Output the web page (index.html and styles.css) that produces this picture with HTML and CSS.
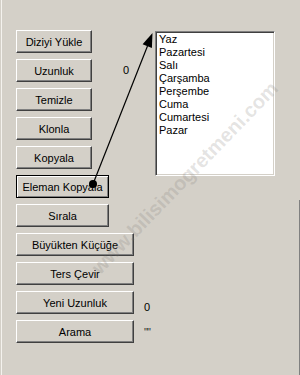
FILE: index.html
```html
<!DOCTYPE html>
<html>
<head>
<meta charset="utf-8">
<link rel="stylesheet" href="styles.css">
</head>
<body>
<div class="window">
  <div class="form">
    <div class="row"><button class="btn w75">Diziyi Yükle</button></div>
    <div class="listbox">
      <div>Yaz</div>
      <div>Pazartesi</div>
      <div>Salı</div>
      <div>Çarşamba</div>
      <div>Perşembe</div>
      <div>Cuma</div>
      <div>Cumartesi</div>
      <div>Pazar</div>
    </div>
    <div class="row"><button class="btn w75">Uzunluk</button><span class="lbl lbl-far">0</span></div>
    <div class="row"><button class="btn w75">Temizle</button></div>
    <div class="row"><button class="btn w75">Klonla</button></div>
    <div class="row"><button class="btn w75">Kopyala</button></div>
    <div class="row"><button class="btn w92 default">Eleman Kopyala</button></div>
    <div class="row wide"><button class="btn w92">Sırala</button></div>
    <div class="row wide"><button class="btn w117">Büyükten Küçüğe</button></div>
    <div class="row wide"><button class="btn w117">Ters Çevir</button></div>
    <div class="row wide"><button class="btn w117">Yeni Uzunluk</button><span class="lbl lbl-near">0</span></div>
    <div class="row wide"><button class="btn w117">Arama</button><span class="lbl lbl-near quote">""</span></div>
  </div>
  <div class="watermark">www.bilisimogretmeni.com</div>
  <svg class="arrow" width="300" height="375" viewBox="0 0 300 375">
    <line x1="93" y1="184" x2="147.5" y2="46" stroke="#000" stroke-width="1.2"/>
    <polygon points="152.5,33 151.9,47.9 142.6,44.3" fill="#000"/>
    <circle cx="93" cy="184" r="4" fill="#000"/>
  </svg>
  <div class="edge"></div>
</div>
</body>
</html>
```
FILE: styles.css
```css
html, body {
  margin: 0;
  padding: 0;
  background: #d4d0c8;
}
body {
  width: 300px;
  height: 375px;
  overflow: hidden;
  font-family: "Liberation Sans", Arial, sans-serif;
  font-size: 11px;
  color: #000;
}
.window {
  position: relative;
  width: 298px;
  height: 375px;
  margin-left: 1px;
  border-left: 1px solid #f4f2ee;
  box-sizing: border-box;
}
.form {
  display: grid;
  grid-template-columns: 139px 120px;
  grid-auto-rows: 23px;
  row-gap: 6px;
  padding: 30px 0 0 14px;
}
.row {
  grid-column: 1;
  display: flex;
  align-items: center;
}
.row.wide {
  grid-column: 1 / -1;
}
.btn {
  height: 23px;
  box-sizing: border-box;
  margin: 0;
  padding: 0;
  background: #d4d0c8;
  border: 1px solid;
  border-color: #fff #404040 #404040 #fff;
  box-shadow: inset -1px -1px #808080;
  font-family: "Liberation Sans", Arial, sans-serif;
  font-size: 11px;
  font-weight: normal;
  color: #000;
  text-align: center;
}
.btn.default {
  border-color: #000;
  box-shadow: inset 1px 1px #fff, inset -1px -1px #808080;
}
.w75 { width: 76px; }
.w92 { width: 93px; }
.w117 { width: 118px; }
.lbl {
  font-size: 11px;
  line-height: 13px;
}
.lbl-far { margin-left: 31px; }
.lbl-near { margin-left: 10px; margin-top: 10px; }
.quote { margin-top: 2px; letter-spacing: -1px; color: #333; }
.listbox {
  grid-column: 2;
  grid-row: 1 / span 6;
  align-self: start;
  margin-top: 1px;
  width: 120px;
  height: 145px;
  box-sizing: border-box;
  background: #fff;
  border: 1px solid;
  border-color: #808080 #fff #fff #808080;
  box-shadow: inset 1px 1px #404040, inset -1px -1px #d4d0c8;
  padding: 1px 0 0 3px;
  font-size: 11px;
  line-height: 13px;
}
.watermark {
  position: absolute;
  left: 183px;
  top: 178px;
  transform: translate(-50%, -50%) rotate(-46deg);
  font-size: 20px;
  font-weight: bold;
  white-space: nowrap;
  color: rgba(120, 116, 110, 0.2);
  pointer-events: none;
}
.arrow {
  position: absolute;
  left: -2px;
  top: 0;
  pointer-events: none;
}
.edge {
  position: absolute;
  right: -2px;
  top: 200px;
  bottom: 0;
  width: 2px;
  background: #404040;
  border-left: 1px solid #808080;
  box-sizing: border-box;
}
```
